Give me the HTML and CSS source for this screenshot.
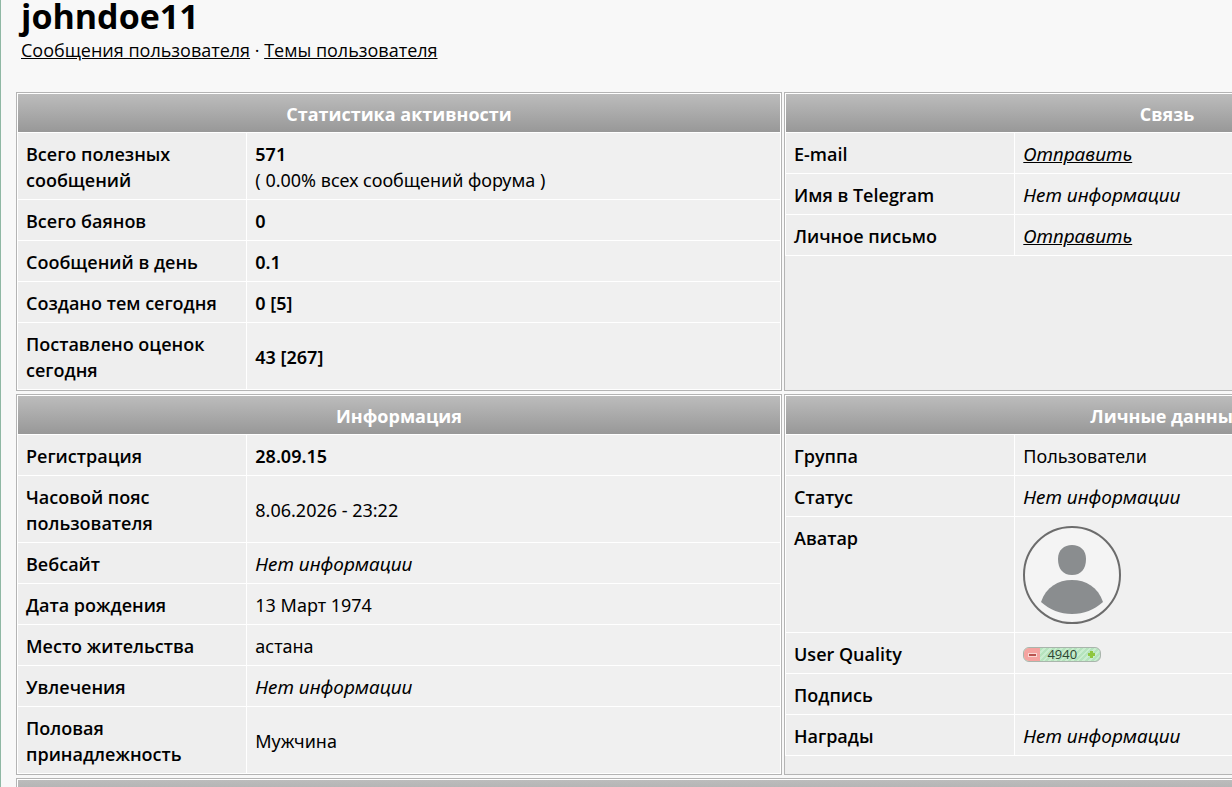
FILE: index.html
```html
<!DOCTYPE html>
<html lang="ru">
<head>
    <meta charset="UTF-8">
    <meta name="viewport" content="width=device-width, initial-scale=1.0">
    <title>johndoe11 - Просмотр профиля</title>
    <link rel="stylesheet" href="styles.css">
</head>
<body>
    <div class="page">
        <header class="user-head">
            <h1>johndoe11</h1>
            <p><a href="#">Сообщения пользователя</a> · <a href="#">Темы пользователя</a></p>
        </header>

        <main class="profile">
            <section class="panel">
                <table>
                    <colgroup><col class="label-col"><col></colgroup>
                    <thead>
                        <tr><th colspan="2" class="title">Статистика активности</th></tr>
                    </thead>
                    <tbody>
                        <tr>
                            <th scope="row">Всего полезных сообщений</th>
                            <td><b>571</b><br>( 0.00% всех сообщений форума )</td>
                        </tr>
                        <tr><th scope="row">Всего баянов</th><td><b>0</b></td></tr>
                        <tr><th scope="row">Сообщений в день</th><td><b>0.1</b></td></tr>
                        <tr><th scope="row">Создано тем сегодня</th><td><b>0 [5]</b></td></tr>
                        <tr><th scope="row">Поставлено оценок сегодня</th><td><b>43 [267]</b></td></tr>
                    </tbody>
                </table>
            </section>

            <section class="panel">
                <table>
                    <colgroup><col class="label-col"><col></colgroup>
                    <thead>
                        <tr><th colspan="2" class="title">Связь</th></tr>
                    </thead>
                    <tbody>
                        <tr><th scope="row">E-mail</th><td><i><a href="#">Отправить</a></i></td></tr>
                        <tr><th scope="row">Имя в Telegram</th><td><i>Нет информации</i></td></tr>
                        <tr><th scope="row">Личное письмо</th><td><i><a href="#">Отправить</a></i></td></tr>
                    </tbody>
                </table>
            </section>

            <section class="panel">
                <table>
                    <colgroup><col class="label-col"><col></colgroup>
                    <thead>
                        <tr><th colspan="2" class="title">Информация</th></tr>
                    </thead>
                    <tbody>
                        <tr><th scope="row">Регистрация</th><td><b>28.09.15</b></td></tr>
                        <tr><th scope="row">Часовой пояс пользователя</th><td>8.06.2026 - 23:22</td></tr>
                        <tr><th scope="row">Вебсайт</th><td><i>Нет информации</i></td></tr>
                        <tr><th scope="row">Дата рождения</th><td>13 Март 1974</td></tr>
                        <tr><th scope="row">Место жительства</th><td>астана</td></tr>
                        <tr><th scope="row">Увлечения</th><td><i>Нет информации</i></td></tr>
                        <tr><th scope="row">Половая принадлежность</th><td>Мужчина</td></tr>
                    </tbody>
                </table>
            </section>

            <section class="panel">
                <table>
                    <colgroup><col class="label-col"><col></colgroup>
                    <thead>
                        <tr><th colspan="2" class="title">Личные данные</th></tr>
                    </thead>
                    <tbody>
                        <tr><th scope="row">Группа</th><td>Пользователи</td></tr>
                        <tr><th scope="row">Статус</th><td><i>Нет информации</i></td></tr>
                        <tr class="avatar-row">
                            <th scope="row">Аватар</th>
                            <td>
                                <svg class="avatar" viewBox="0 0 98 98" role="img" aria-label="Аватар">
                                    <circle cx="49" cy="49" r="48" fill="#f4f4f4" stroke="#6c6c6c" stroke-width="2"/>
                                    <path d="M49 19c8 0 14 5 14 14 0 10-5 16-14 16s-14-6-14-16c0-9 6-14 14-14z" fill="#8a8d8f"/>
                                    <path d="M18 76C23 61 35 54 49 54s26 7 31 22c-9 8-19 12-31 12s-22-4-31-12z" fill="#8a8d8f"/>
                                </svg>
                            </td>
                        </tr>
                        <tr>
                            <th scope="row">User Quality</th>
                            <td>
                                <div class="quality">
                                    <button type="button" class="minus" aria-label="Минус">
                                        <svg viewBox="0 0 16 13"><path d="M4 5h9v4H4z" fill="#f8d8d4"/><path d="M5 6h7v2H5z" fill="#b9544f"/></svg>
                                    </button>
                                    <span>4940</span>
                                    <button type="button" class="plus" aria-label="Плюс">
                                        <svg viewBox="0 0 16 13"><path d="M6 3h3v2h2v3H9v2H6V8H4V5h2z" fill="#8fc63f"/></svg>
                                    </button>
                                </div>
                            </td>
                        </tr>
                        <tr><th scope="row">Подпись</th><td></td></tr>
                        <tr><th scope="row">Награды</th><td><i>Нет информации</i></td></tr>
                    </tbody>
                </table>
            </section>

            <section class="panel wide">
                <div class="title"></div>
            </section>
        </main>
    </div>
</body>
</html>
```

FILE: styles.css
```css
* { margin: 0; padding: 0; box-sizing: border-box; }
html {
    overflow: hidden auto;
}
body {
    min-width: 1566px;
    min-height: 100vh;
    border-left: 1px solid #8fb8a4;
    font-family: 'Segoe UI', 'Open Sans', 'Noto Sans', sans-serif;
    font-size: 18px;
    line-height: 26px;
    color: #000;
    background: #f8f8f8;
}
a {
    color: #000;
    text-decoration: underline;
}
b {
    font-weight: 600;
}
.page {
    padding: 0 16px 0 15px;
}
.user-head {
    padding: 0 5px;
    margin-bottom: 29px;
}
h1 {
    margin-bottom: 4px;
    font-size: 34px;
    line-height: 33px;
    font-weight: 700;
}

/* profile blocks */
.profile {
    display: grid;
    grid-template-columns: 1fr 1fr;
    gap: 3px 2px;
}
.panel {
    background: #eee;
    border: 1px solid #b4b4b4;
}
.wide {
    grid-column: 1 / -1;
    padding: 1px;
    background: #fff;
}
table {
    width: 100%;
    table-layout: fixed;
    border-spacing: 1px;
    background: #fff;
}
.label-col {
    width: 30%;
}
th, td {
    padding: 8px 8px 6px;
    height: 40px;
    text-align: left;
    vertical-align: middle;
}
th {
    font-weight: 600;
    background: #eee;
}
td {
    font-family: 'Segoe UI', 'Noto Sans', sans-serif;
    background: #f0f0f0;
}
td i {
    font-size: 19px;
}
.title {
    height: 38px;
    padding: 7px 8px 5px;
    text-align: center;
    font-weight: 700;
    color: #fff;
    background: linear-gradient(#bcbcbc, #989898);
}
.avatar-row th, .avatar-row td {
    height: 115px;
    vertical-align: top;
}
.avatar {
    display: block;
    width: 98px;
    height: 98px;
    margin-top: 1px;
}

/* reputation counter */
.quality {
    display: flex;
    align-items: center;
    width: 78px;
    height: 15px;
    border: 1px solid #a9b5ac;
    border-radius: 6px;
    overflow: hidden;
    background: repeating-linear-gradient(135deg, #b5e3bd 0, #b5e3bd 2px, #c9edcf 2px, #c9edcf 4px);
}
.quality span {
    flex: 1;
    text-align: center;
    font-family: 'Open Sans', sans-serif;
    font-size: 13px;
    line-height: 13px;
    color: #2d4632;
}
.quality button {
    width: 16px;
    height: 13px;
    border: none;
    background: none;
    cursor: pointer;
}
.quality svg {
    display: block;
    width: 16px;
    height: 13px;
}
.quality .minus {
    background: #f5a3a0;
}
```
